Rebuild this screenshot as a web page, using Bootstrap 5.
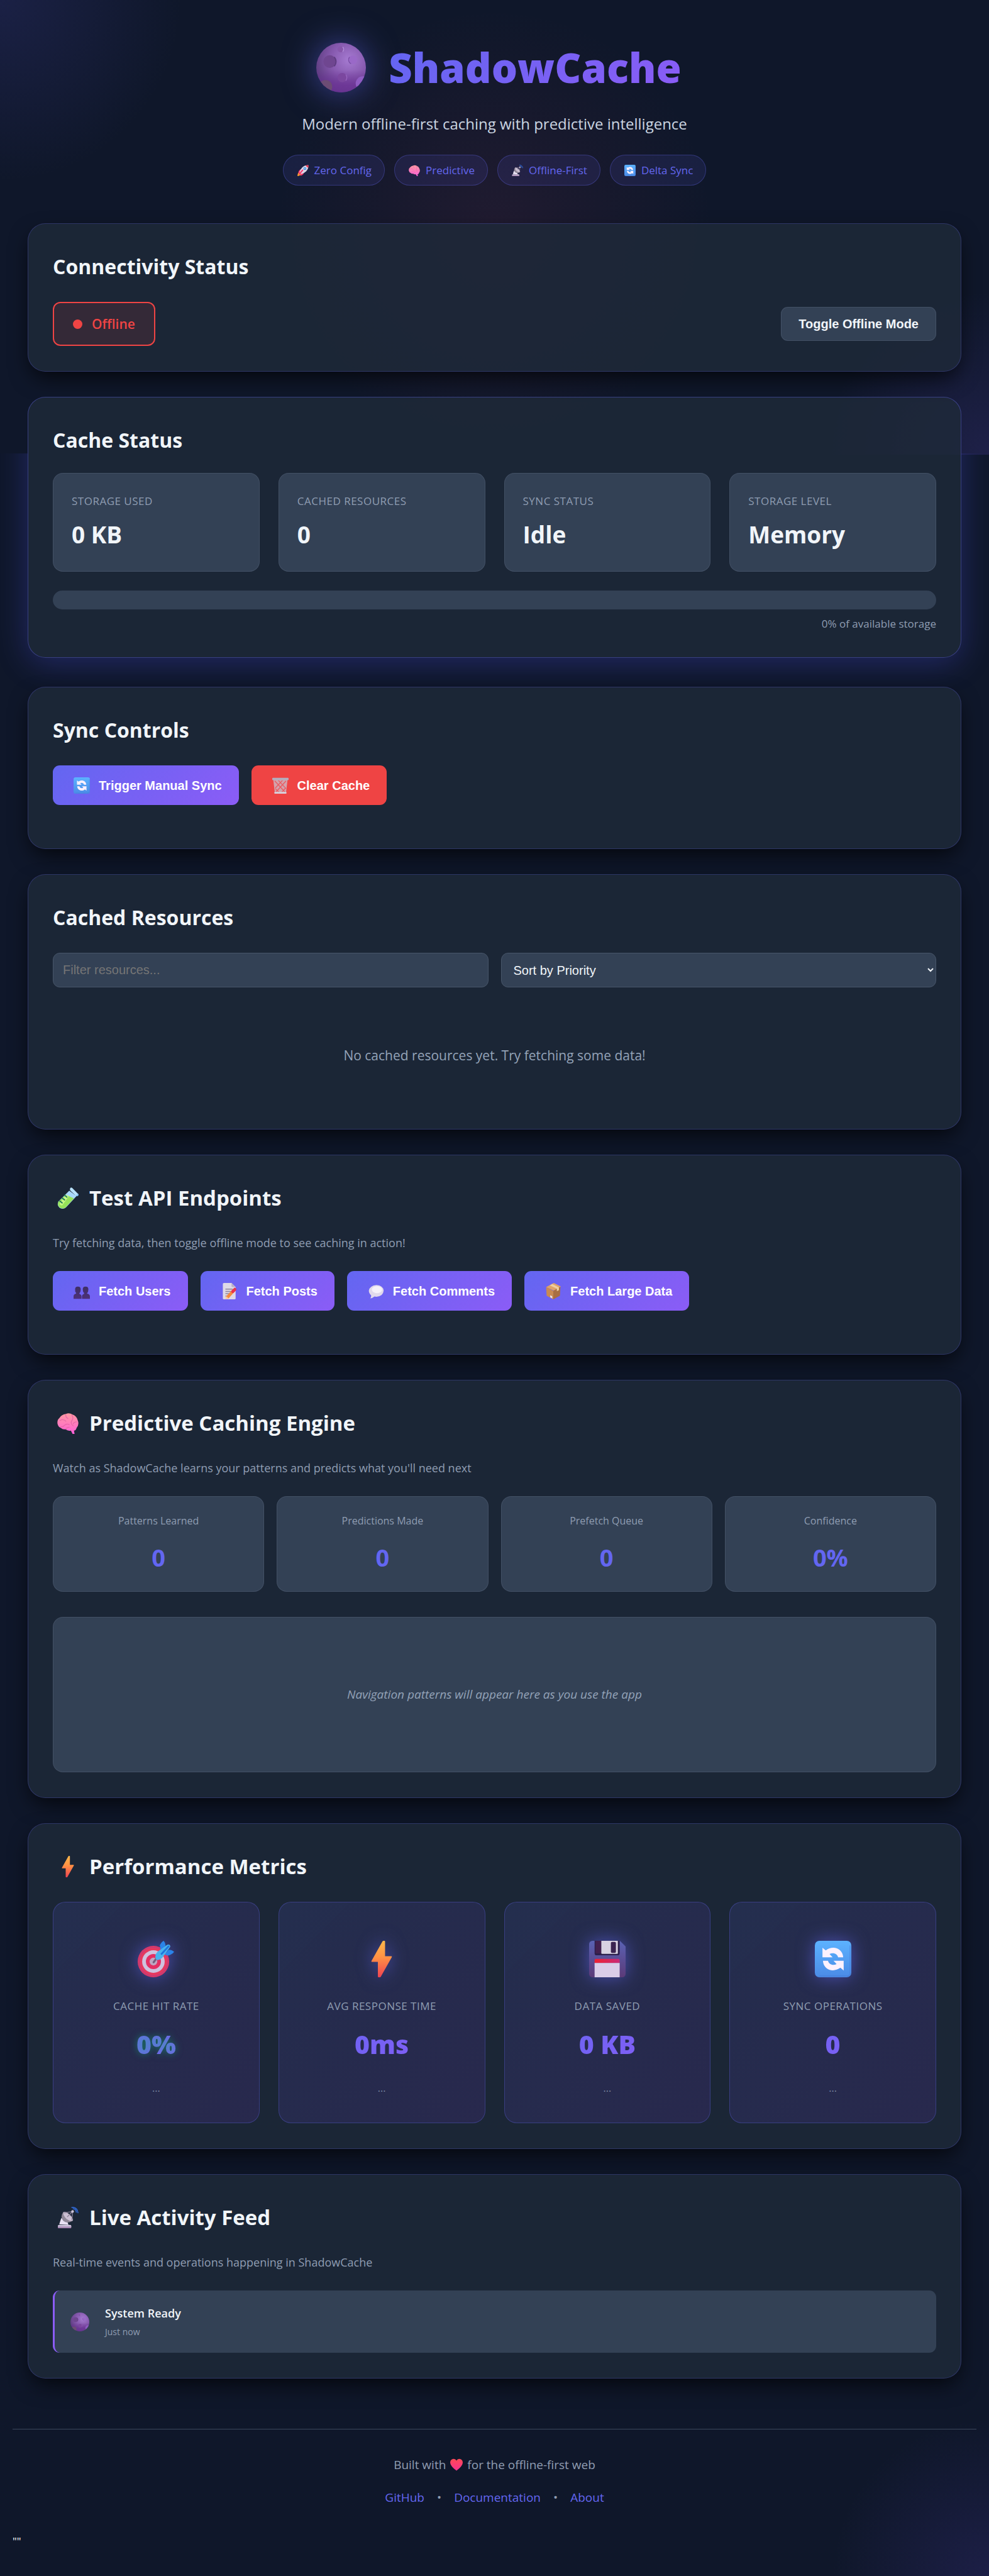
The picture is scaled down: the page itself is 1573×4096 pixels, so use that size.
<!DOCTYPE html>
<html lang="en">
<head>
<meta charset="utf-8">
<meta name="viewport" content="width=device-width, initial-scale=1">
<title>ShadowCache</title>
<link href="https://cdn.jsdelivr.net/npm/bootstrap@5.3.0/dist/css/bootstrap.min.css" rel="stylesheet">
<style>
:root{
  --sc-indigo:#6366f1; --sc-violet:#8b5cf6; --sc-bg:#0f172a; --sc-tile:#334155;
  --sc-line:rgba(148,163,184,.16); --sc-text:#f1f5f9; --sc-muted:#8f9db2;
  --sc-grad:linear-gradient(135deg,#6366f1,#8b5cf6);
}
body{
  min-height:100vh; color:var(--sc-text);
  font-family:"Open Sans","Noto Sans",sans-serif; font-size:17px; line-height:27px;
  background:
    radial-gradient(circle 250px at 100% 100%,rgba(99,72,220,.16),transparent) no-repeat,
    radial-gradient(circle 290px at 0 0,rgba(99,92,235,.14),transparent) 0 0/100% 723px no-repeat,
    radial-gradient(circle 260px at 100% 100%,rgba(110,82,230,.16),transparent) 0 0/100% 723px no-repeat,
    radial-gradient(circle 350px at 50% 50%,rgba(236,72,120,.08),transparent) 0 0/100% 723px no-repeat,
    var(--sc-bg);
}
.page-wrap{padding:0 20px}
.page-main{padding:0 24px}

/* header */
.hero{padding:58px 0 60px}
.hero-logo{height:98px; gap:22px}
.moon-slot{width:107px}
.moon-slot svg{width:79px;height:79px;filter:drop-shadow(0 0 26px rgba(99,102,241,.55))}
.hero-title{font-size:65px;line-height:98px;font-weight:800}
.grad-text{background:var(--sc-grad);-webkit-background-clip:text;background-clip:text;color:transparent}
.hero-sub{font-size:24px;line-height:40px;margin:21px 0 29px;color:#cbd5e1}
.pill-list{gap:15px}
.pill{display:flex;align-items:center;gap:7px;height:49px;padding:0 20px;border-radius:25px;
  border:1px solid rgba(99,102,241,.32);background:rgba(99,102,241,.12);color:#6467ee;font-weight:500}
.pill svg{width:18px;height:18px;margin:0 2px}

/* panels */
.panel{position:relative;padding:40px 39px;margin-bottom:40px;border-radius:28px;
  background:rgba(30,41,57,.82);border:1px solid rgba(99,102,241,.26);
  box-shadow:0 14px 34px -6px rgba(0,0,0,.75)}
.panel h2{font-size:32px;line-height:56px;font-weight:700;margin:0 0 28px;display:flex;align-items:center}
.panel h2.icon-title{font-size:33px}
.panel h2 svg{width:34px;height:34px;margin:0 17px 0 7px;flex:none}
.panel-note{font-size:18px;line-height:30px;margin:0 0 30px;color:var(--sc-muted)}
.panel-active{margin-bottom:46px;box-shadow:none;border-color:rgba(99,102,241,.4)}
.panel-active h2{margin-bottom:24px}
.panel-active::before{content:"";position:absolute;inset:-1px;border-radius:inherit;pointer-events:none;
  box-shadow:0 8px 50px rgba(79,84,241,.3);clip-path:inset(90px -44px -80px -44px)}

.state-badge{height:70px;padding:0 30px;gap:15px;border:2px solid #ef4444;border-radius:12px;
  background:rgba(239,68,68,.12);color:#ef4444;font-size:21px;font-weight:600}
.state-dot{width:15px;height:15px;border-radius:50%;background:#ef4444}
.btn-sc{font:700 20px/24px "Liberation Sans",Arial,sans-serif;height:63px;padding:0 27px;border:0;border-radius:11px;
  display:inline-flex;align-items:center;color:#fff}
.btn-sc svg{width:26px;height:26px;margin:0 14px 0 6px}
.btn-sc:hover{color:#fff}
.btn-grad,.btn-grad:hover{background:var(--sc-grad)}
.btn-red,.btn-red:hover{background:#ef4444}
.btn-slate,.btn-slate:hover{height:54px;background:var(--sc-tile);border:1px solid var(--sc-line);color:var(--sc-text)}
.btn-set{gap:20px;margin-bottom:29px}

.tiles{--bs-gutter-x:30px;--bs-gutter-y:30px}
.tiles-tight{--bs-gutter-x:20px;--bs-gutter-y:20px}
.tile{height:100%;padding:30px 29px;border-radius:16px;background:var(--sc-tile);border:1px solid var(--sc-line)}
.tile-label{color:var(--sc-muted);text-transform:uppercase;letter-spacing:.5px}
.tile-value{font-size:37px;line-height:56px;font-weight:700;margin-top:12px}
.usage{height:30px;border-radius:15px;background:var(--sc-tile);margin-top:30px}
.usage-note{line-height:26px;margin-top:10px;color:var(--sc-muted)}

.field{height:55px;width:100%;padding:0 15px;border:1px solid #475569;border-radius:11px;background-color:var(--sc-tile);
  color:var(--sc-text);font:20px "Liberation Sans",Arial,sans-serif}
.field::placeholder{color:#757575}
.empty-note{margin-top:32px;padding:60px 0;font-size:21px;line-height:33px;color:#94a3b8}

.tile-sm{padding:25px 20px}
.tile-sm .tile-label{font-size:16px;text-transform:none;letter-spacing:normal}
.tile-sm .tile-value{font-size:38px;line-height:58px;color:var(--sc-indigo);margin-top:15px}
.pattern-box{height:247px;margin-top:40px;border-radius:16px;background:var(--sc-tile);border:1px solid var(--sc-line);
  font-size:19px;font-style:italic;color:#94a3b8}

.metric{height:100%;padding:40px 20px;border-radius:20px;border:1px solid rgba(99,102,241,.32);
  background:linear-gradient(135deg,rgba(99,102,241,.13),rgba(120,60,220,.14))}
.metric-icon{height:100px}
.metric-icon svg{width:58px;height:58px;filter:drop-shadow(0 0 14px rgba(99,102,241,.6))}
.metric .tile-label{margin-top:11px}
.metric-value{font-size:41px;line-height:62px;font-weight:800;margin-top:16px}
.metric-good{text-shadow:0 0 12px rgba(16,185,129,.5)}
.metric-trend{font-size:16px;line-height:30px;margin-top:24px;color:#7c89a3}

.feed-item{padding:20px;gap:20px;border-left:3px solid var(--sc-violet);border-radius:11px;background:var(--sc-tile)}
.feed-item svg{width:30px;height:30px;margin:0 5px}
.feed-title{font-size:18px;line-height:33px;font-weight:600}
.feed-time{font-size:14px;line-height:26px;color:var(--sc-muted)}

.page-foot{margin-top:80px;padding:40px 0;border-top:1px solid #3b475b;font-size:19px;line-height:32px;color:#8f9db2}
.page-foot svg{width:20px;height:20px;margin:0 3px}
.page-foot a{color:var(--sc-indigo);text-decoration:none}
.foot-links{margin-top:20px;gap:20px}
</style>
<script src="https://cdn.jsdelivr.net/npm/bootstrap@5.3.0/dist/js/bootstrap.bundle.min.js"></script>
</head>
<body>

<svg width="0" height="0" class="position-absolute" aria-hidden="true">
  <defs>
    <radialGradient id="gMoon" cx=".66" cy=".34" r=".75"><stop offset="0" stop-color="#a67bd2"/><stop offset=".5" stop-color="#8558ad"/><stop offset="1" stop-color="#58397a"/></radialGradient>
    <linearGradient id="gMoonLow" x1="0" y1="0" x2="0" y2="1"><stop offset=".55" stop-color="#6b2f96" stop-opacity="0"/><stop offset=".85" stop-color="#6b2f96" stop-opacity=".7"/></linearGradient>
    <linearGradient id="gBolt" x1="0" y1="0" x2="0" y2="1"><stop offset="0" stop-color="#ffb84a"/><stop offset=".45" stop-color="#ff9144"/><stop offset="1" stop-color="#ef4352"/></linearGradient>
    <linearGradient id="gSync" x1="0" y1="0" x2="0" y2="1"><stop offset="0" stop-color="#5cb2ff"/><stop offset="1" stop-color="#4b8be6"/></linearGradient>
    <linearGradient id="gDisk" x1="0" y1="0" x2="0" y2="1"><stop offset="0" stop-color="#5a62b4"/><stop offset="1" stop-color="#5b3a78"/></linearGradient>
    <linearGradient id="gStrip"><stop offset="0" stop-color="#ee2233"/><stop offset="1" stop-color="#c92a78"/></linearGradient>
    <linearGradient id="gBrain" x1="0" y1="0" x2="0" y2="1"><stop offset="0" stop-color="#ff9aa0"/><stop offset="1" stop-color="#ff5fd8"/></linearGradient>
    <linearGradient id="gHeart" x1="0" y1="0" x2="0" y2="1"><stop offset="0" stop-color="#ff4a55"/><stop offset="1" stop-color="#f5308e"/></linearGradient>
    <linearGradient id="gUser" x1="0" y1="0" x2="0" y2="1"><stop offset="0" stop-color="#3e2f63"/><stop offset="1" stop-color="#4d3079"/></linearGradient>
    <clipPath id="cMoon"><circle cx="16" cy="16" r="16"/></clipPath>
  </defs>
  <symbol id="i-moon" viewBox="0 0 32 32"><g clip-path="url(#cMoon)"><path fill="url(#gMoon)" d="M0 0h32v32H0z"/><path fill="url(#gMoonLow)" d="M0 0h32v32H0z"/><circle cx="15.7" cy="4.2" r="2" fill="#8757ab"/><path d="M17 2.700a2 2 0 0 1 0 3" stroke="#b58fdc" stroke-width=".5" fill="none"/><circle cx="8.700" cy="12.100" r="4.100" fill="#6f4690"/><path d="M11.500 9.200a4.100 4.100 0 0 1 0 5.900" stroke="#5d3b80" stroke-width=".7" fill="none"/><circle cx="23.600" cy="11" r="2.800" fill="#9a69c8"/><path d="M21.400 9.200a2.800 2.800 0 0 0 1 4.300" stroke="#7b50a6" stroke-width=".6" fill="none"/><circle cx="16.700" cy="22.400" r="3" fill="#7b479f"/><path d="M19 20.500a3 3 0 0 1 0 3.900" stroke="#9a66c0" stroke-width=".5" fill="none"/><circle cx="6" cy="28.300" r="4.300" fill="#6c4c74"/><circle cx="30" cy="26.200" r="4.600" fill="#8f5cc2"/></g></symbol>
  <symbol id="i-sync" viewBox="0 0 32 32"><rect width="32" height="32" rx="4" fill="url(#gSync)"/><path d="M31 4v24q0 3-3 3H4" fill="none" stroke="#4379d6" stroke-opacity=".5"/><g fill="#fdf1fd"><path d="M6.700 6v8.500h8.900L12.900 11.600c3.200-1.600 6.900-.3 7.500 2.900h4.500C24.400 6.600 15.900 3.700 9.600 8.400z"/><path transform="rotate(180 16 16)" d="M6.700 6v8.500h8.900L12.900 11.600c3.200-1.600 6.900-.3 7.500 2.900h4.500C24.400 6.600 15.900 3.700 9.600 8.400z"/></g></symbol>
  <symbol id="i-bolt" viewBox="0 0 32 32"><path fill="url(#gBolt)" d="M16.700.5Q17 0 17.600 0H18.400Q19 0 19 .6V13.500H24.400Q25.300 13.500 24.900 14.300L15.300 31.500Q15 32 14.500 32H13.400Q12.700 32 12.700 31.400V18.500H7.500Q6.700 18.500 7.100 17.600z"/></symbol>
  <symbol id="i-target" viewBox="0 0 32 32"><circle cx="13.800" cy="18.200" r="13.800" fill="#e5395f"/><circle cx="13.800" cy="18.200" r="12.600" fill="none" stroke="#c73a78" stroke-width="1"/><circle cx="13.800" cy="18.200" r="9.900" fill="#cfc2de"/><circle cx="13.800" cy="18.200" r="6.600" fill="#e42f63"/><circle cx="13.800" cy="18.200" r="3.400" fill="#bfa6c2"/><path d="M14 18.800l2.500-3.500" stroke="#75607f" stroke-width="1.800" stroke-linecap="round"/><path fill="#2b84e8" d="M20.500 9.500 19.400 4Q21 .8 22.800 0q1.600 1.600 1.700 4.200zM23.500 12l3.600-4.200q3 0 4.900 1.900-2 2.600-5.600 3.300z"/><path fill="#49b3ee" d="M15.500 14.500Q15.200 12 17.500 9.500L26 3.500q2.500-.7 2.600 1.700L22 14.300q-2.800 3-5.300 2.500-1-.7-1.200-2.300z"/><path d="M20.500 12l7-7.600" stroke="#1f74dc" stroke-width="1.500"/></symbol>
  <symbol id="i-disk" viewBox="0 0 32 32"><path fill="url(#gDisk)" d="M3 0h24l5 5v24a3 3 0 0 1-3 3H3a3 3 0 0 1-3-3V3a3 3 0 0 1 3-3z"/><path fill="#2b1f4c" d="M4.800 0h22v11a1.700 1.700 0 0 1-1.700 1.700H6.500A1.700 1.700 0 0 1 4.800 11z"/><path fill="#42204f" d="M5.600 0h5v11h-5z"/><path fill="#d9d3e2" d="M10.700 0h14.500v10.800q0 .7-.7.700H11.400q-.7 0-.7-.7z"/><rect x="19.100" y="1" width="4.400" height="9.600" rx="1" fill="#3b2450"/><path fill="url(#gStrip)" d="M6 15.800h19.600q1.200 0 1.200 1.200v2.500h-22V17q0-1.200 1.200-1.200z"/><path fill="#dacde8" d="M4.800 19.400h22V32h-22z"/></symbol>
  <symbol id="i-rocket" viewBox="0 0 32 32"><path fill="#ff9d2e" d="M2 23q4-3 7 0t1 6l-8 3q-2 0-2-2z"/><path fill="#f5356b" d="M7 14q5-3 9-1l-8 11H3q-1-6 4-10zM19 15q1 7-2 11-3 4-8 5l0-6z"/><path fill="#d9d5e6" d="M31 1q1 10-6 17-6 6-14 8l-5-5q2-8 8-14Q21 1 31 1z"/><path fill="#e8304c" d="M31 1q.6 4-.6 8L23 2q4-1 8-1z"/><circle cx="21" cy="10.500" r="4" fill="#3d7fd6"/><circle cx="21" cy="10.500" r="2.500" fill="#7cc4f5"/><path d="M6 26 15 15" stroke="#f5356b" stroke-width="3.500" stroke-linecap="round"/></symbol>
  <symbol id="i-brain" viewBox="0 0 32 32"><path fill="url(#gBrain)" d="M13 2q5-2 10 1 6 2 7.500 8 3 7-1.500 12-1 4-4 4l1 5h-3l-2.500-5q-5 1-8-2-4 1-7-2-4-1-5-6-1-6 3-9Q6 3 13 2z"/><g fill="none" stroke="#e868a8" stroke-width="1.200" stroke-linecap="round"><path d="M13 3q-1 4 3 6M4 12q5-3 9 1M22 4q3 4 0 8t2 8M29 14q-4 0-5 3M5 21q4 1 6-2 3-3 7-1M13 25q1-3 5-3"/></g></symbol>
  <symbol id="i-dish" viewBox="0 0 32 32"><path fill="#e9e1f3" d="M3 26l3-9 8 2 3 8z"/><rect x="1" y="27" width="20" height="4.500" rx="1.500" fill="#d2c8de"/><path fill="#a98ab5" d="M1 29.500h20v1.500a1 1 0 0 1-1 1H2a1 1 0 0 1-1-1z"/><path fill="#8f8797" d="M9 8Q4 15 9 21q6 5 14 0z"/><path fill="#cbbfd2" d="M9 8q0 6 5 10t9 3q2-3-4-9T9 8z"/><path d="M10 9l13-2-1 13M15 15l8-8" stroke="#8d8299" stroke-width="1.200" fill="none"/><circle cx="23" cy="7" r="2" fill="#cfc6d9"/><path d="M24 3q4 0 4.500 5M22 .8q8-.5 9 8" stroke="#2f62c4" stroke-width="1.700" fill="none" stroke-linecap="round"/></symbol>
  <symbol id="i-tube" viewBox="0 0 32 32"><path fill="#a8d8fa" d="M18 5 29 13 13 30Q8 34 3 30-1 26 2 21z"/><path fill="#96e35a" d="M13 11l12 5.500L12.500 30Q8 33.300 3.200 29.600-.5 25.500 2.300 21z"/><path fill="#c8f884" d="M13 11l4.500 2L7.500 27q-3.500 0-4-3z"/><path fill="#b9e2fc" d="M19.500 1.200Q20.500-.6 22.300.6L31.200 9.600q1.200 2-.4 3.200-1.300.8-2.600-.2L20 5.200q-1.700-1.900-.5-4z"/><path fill="#7fbdf0" d="M28 12.500l3.300-3q1.200 2-.4 3.400-1.500.9-2.900-.4z"/><path d="M4 20.500l3.500 2.700M7.500 16l3.500 2.700M11 11.800l3.500 2.700" stroke="#1f7a5c" stroke-width="1.800" stroke-linecap="round"/></symbol>
  <symbol id="i-trash" viewBox="0 0 32 32"><path fill="#c9c3cf" fill-opacity=".75" d="M2 4h28l-3 26q-.3 2-2 2H7q-1.700 0-2-2z"/><path d="M5 7l20 22M27 7 7 29M12 6l15 16M20 6 6 21M18 30l8-9M14 30l-8-8" stroke="#ec5a60" stroke-width="1.700"/><rect x="0" y="1" width="32" height="4.500" rx="1.500" fill="#b4adbd"/><rect x="4" y="28.500" width="24" height="3.500" rx="1.500" fill="#d8d3de"/></symbol>
  <symbol id="i-users" viewBox="0 0 32 32"><g fill="url(#gUser)"><path d="M8.500 7q5.500 0 5.500 5.500 0 5-2.500 7.500v1.500q4 1 4 5V31H0v-4.500q0-4.500 5-5.500v-1.500Q2.500 17 3 12.500 3 7 8.500 7z"/><path d="M23.500 7q5.500 0 5.500 5.500 0 5-2.500 7.500v1q5.500 1 5.500 5.500V31H16.500v-4.500q0-4 4-5v-2Q18 17 18 12.500 18 7 23.500 7z"/></g></symbol>
  <symbol id="i-note" viewBox="0 0 32 32"><path fill="#ded9e6" d="M5 0h15l8 8v22q0 2-2 2H5q-2 0-2-2V2q0-2 2-2z"/><path fill="#b9b0c6" d="M20 0l8 8h-6q-2 0-2-2z"/><path d="M8 12h14M8 16.500h14M8 21h9M8 25.500h6" stroke="#8e849c" stroke-width="1.800"/><path d="M12 28 24 15" stroke="#f58a3c" stroke-width="6" stroke-linecap="round"/><path d="M22.500 16.500l4-4" stroke="#e8344e" stroke-width="6" stroke-linecap="round"/><path fill="#f9c8a2" d="M8 32l1.500-6.500 5 5z"/></symbol>
  <symbol id="i-bubble" viewBox="0 0 32 32"><path fill="#e0d9ec" d="M17 4q13 1 14 11-1 11-14 12-2 0-4-.5Q9 30 5 30q2-3 1.500-6Q2 20 2 15 4 5 17 4z"/><ellipse cx="18" cy="13" rx="10" ry="7" fill="#f5f1fa"/></symbol>
  <symbol id="i-box" viewBox="0 0 32 32"><path fill="#e0a368" d="M17 0 31 7 17 15 2 8z"/><path fill="#c98a52" d="M2 8l14 7.500V32L3 25z"/><path fill="#a96f42" d="M30 7.500 16 15.500V32l13-7z"/><path fill="#f0d0a0" d="M9 4.500l5-2.500 13 7v5l-4 2v-5z"/><path fill="#e9e2ee" d="M10 24l4 2v4l-4-2z"/></symbol>
  <symbol id="i-heart" viewBox="0 0 32 32"><path fill="url(#gHeart)" d="M16 31Q1 20 0 11 0 2 8 1q6 0 8 5 2-5 8-5 8 1 8 10-1 9-16 20z"/></symbol>
</svg>

<div class="page-wrap container-fluid">
  <div class="page-main">
    <header class="hero text-center">
      <div class="hero-logo d-flex justify-content-center align-items-center">
        <span class="moon-slot d-flex justify-content-center"><svg aria-hidden="true"><use href="#i-moon"/></svg></span>
        <h1 class="hero-title grad-text mb-0">ShadowCache</h1>
      </div>
      <p class="hero-sub">Modern offline-first caching with predictive intelligence</p>
      <div class="pill-list d-flex flex-wrap justify-content-center">
        <span class="pill"><svg aria-hidden="true"><use href="#i-rocket"/></svg>Zero Config</span>
        <span class="pill"><svg aria-hidden="true"><use href="#i-brain"/></svg>Predictive</span>
        <span class="pill"><svg aria-hidden="true"><use href="#i-dish"/></svg>Offline-First</span>
        <span class="pill"><svg aria-hidden="true"><use href="#i-sync"/></svg>Delta Sync</span>
      </div>
    </header>

    <main>
      <section class="panel">
        <h2>Connectivity Status</h2>
        <div class="d-flex flex-wrap justify-content-between align-items-center">
          <div class="state-badge d-flex align-items-center" role="status"><span class="state-dot"></span>Offline</div>
          <button type="button" class="btn btn-sc btn-slate">Toggle Offline Mode</button>
        </div>
      </section>

      <section class="panel panel-active">
        <h2>Cache Status</h2>
        <div class="row row-cols-1 row-cols-md-2 row-cols-xl-4 tiles">
          <div class="col"><div class="tile"><div class="tile-label">Storage Used</div><div class="tile-value">0 KB</div></div></div>
          <div class="col"><div class="tile"><div class="tile-label">Cached Resources</div><div class="tile-value">0</div></div></div>
          <div class="col"><div class="tile"><div class="tile-label">Sync Status</div><div class="tile-value">Idle</div></div></div>
          <div class="col"><div class="tile"><div class="tile-label">Storage Level</div><div class="tile-value">Memory</div></div></div>
        </div>
        <div class="progress usage" role="progressbar" aria-label="Storage used" aria-valuenow="0" aria-valuemin="0" aria-valuemax="100"><div class="progress-bar" style="width:0%"></div></div>
        <div class="usage-note text-end">0% of available storage</div>
      </section>

      <section class="panel">
        <h2>Sync Controls</h2>
        <div class="btn-set d-flex flex-wrap">
          <button type="button" class="btn btn-sc btn-grad"><svg aria-hidden="true"><use href="#i-sync"/></svg>Trigger Manual Sync</button>
          <button type="button" class="btn btn-sc btn-red"><svg aria-hidden="true"><use href="#i-trash"/></svg>Clear Cache</button>
        </div>
      </section>

      <section class="panel">
        <h2>Cached Resources</h2>
        <div class="row row-cols-1 row-cols-md-2 tiles-tight">
          <div class="col"><input class="field d-block" type="text" placeholder="Filter resources..." aria-label="Filter resources"></div>
          <div class="col"><select class="field d-block" aria-label="Sort resources"><option>Sort by Priority</option></select></div>
        </div>
        <div class="empty-note text-center">No cached resources yet. Try fetching some data!</div>
      </section>

      <section class="panel">
        <h2 class="icon-title"><svg aria-hidden="true"><use href="#i-tube"/></svg>Test API Endpoints</h2>
        <p class="panel-note">Try fetching data, then toggle offline mode to see caching in action!</p>
        <div class="btn-set d-flex flex-wrap">
          <button type="button" class="btn btn-sc btn-grad"><svg aria-hidden="true"><use href="#i-users"/></svg>Fetch Users</button>
          <button type="button" class="btn btn-sc btn-grad"><svg aria-hidden="true"><use href="#i-note"/></svg>Fetch Posts</button>
          <button type="button" class="btn btn-sc btn-grad"><svg aria-hidden="true"><use href="#i-bubble"/></svg>Fetch Comments</button>
          <button type="button" class="btn btn-sc btn-grad"><svg aria-hidden="true"><use href="#i-box"/></svg>Fetch Large Data</button>
        </div>
      </section>

      <section class="panel">
        <h2 class="icon-title"><svg aria-hidden="true"><use href="#i-brain"/></svg>Predictive Caching Engine</h2>
        <p class="panel-note">Watch as ShadowCache learns your patterns and predicts what you'll need next</p>
        <div class="row row-cols-1 row-cols-md-2 row-cols-xl-4 tiles-tight text-center">
          <div class="col"><div class="tile tile-sm"><div class="tile-label">Patterns Learned</div><div class="tile-value">0</div></div></div>
          <div class="col"><div class="tile tile-sm"><div class="tile-label">Predictions Made</div><div class="tile-value">0</div></div></div>
          <div class="col"><div class="tile tile-sm"><div class="tile-label">Prefetch Queue</div><div class="tile-value">0</div></div></div>
          <div class="col"><div class="tile tile-sm"><div class="tile-label">Confidence</div><div class="tile-value">0%</div></div></div>
        </div>
        <div class="pattern-box d-flex align-items-center justify-content-center">Navigation patterns will appear here as you use the app</div>
      </section>

      <section class="panel">
        <h2 class="icon-title"><svg aria-hidden="true"><use href="#i-bolt"/></svg>Performance Metrics</h2>
        <div class="row row-cols-1 row-cols-md-2 row-cols-xl-4 tiles text-center">
          <div class="col"><div class="metric">
            <div class="metric-icon d-flex align-items-center justify-content-center"><svg aria-hidden="true"><use href="#i-target"/></svg></div>
            <div class="tile-label">Cache Hit Rate</div><div class="metric-value grad-text metric-good">0%</div><div class="metric-trend">...</div>
          </div></div>
          <div class="col"><div class="metric">
            <div class="metric-icon d-flex align-items-center justify-content-center"><svg aria-hidden="true"><use href="#i-bolt"/></svg></div>
            <div class="tile-label">Avg Response Time</div><div class="metric-value grad-text">0ms</div><div class="metric-trend">...</div>
          </div></div>
          <div class="col"><div class="metric">
            <div class="metric-icon d-flex align-items-center justify-content-center"><svg aria-hidden="true"><use href="#i-disk"/></svg></div>
            <div class="tile-label">Data Saved</div><div class="metric-value grad-text">0 KB</div><div class="metric-trend">...</div>
          </div></div>
          <div class="col"><div class="metric">
            <div class="metric-icon d-flex align-items-center justify-content-center"><svg aria-hidden="true"><use href="#i-sync"/></svg></div>
            <div class="tile-label">Sync Operations</div><div class="metric-value grad-text">0</div><div class="metric-trend">...</div>
          </div></div>
        </div>
      </section>

      <section class="panel">
        <h2 class="icon-title"><svg aria-hidden="true"><use href="#i-dish"/></svg>Live Activity Feed</h2>
        <p class="panel-note">Real-time events and operations happening in ShadowCache</p>
        <div class="feed-item d-flex align-items-center">
          <svg aria-hidden="true"><use href="#i-moon"/></svg>
          <div><div class="feed-title">System Ready</div><div class="feed-time">Just now</div></div>
        </div>
      </section>
    </main>
  </div>

  <footer class="page-foot text-center">
    <div class="d-flex justify-content-center align-items-center gap-1">Built with <svg aria-hidden="true"><use href="#i-heart"/></svg> for the offline-first web</div>
    <div class="foot-links d-flex justify-content-center"><a href="#">GitHub</a><span>•</span><a href="#">Documentation</a><span>•</span><a href="#">About</a></div>
  </footer>
  <div>""</div>
</div>
</body>
</html>
